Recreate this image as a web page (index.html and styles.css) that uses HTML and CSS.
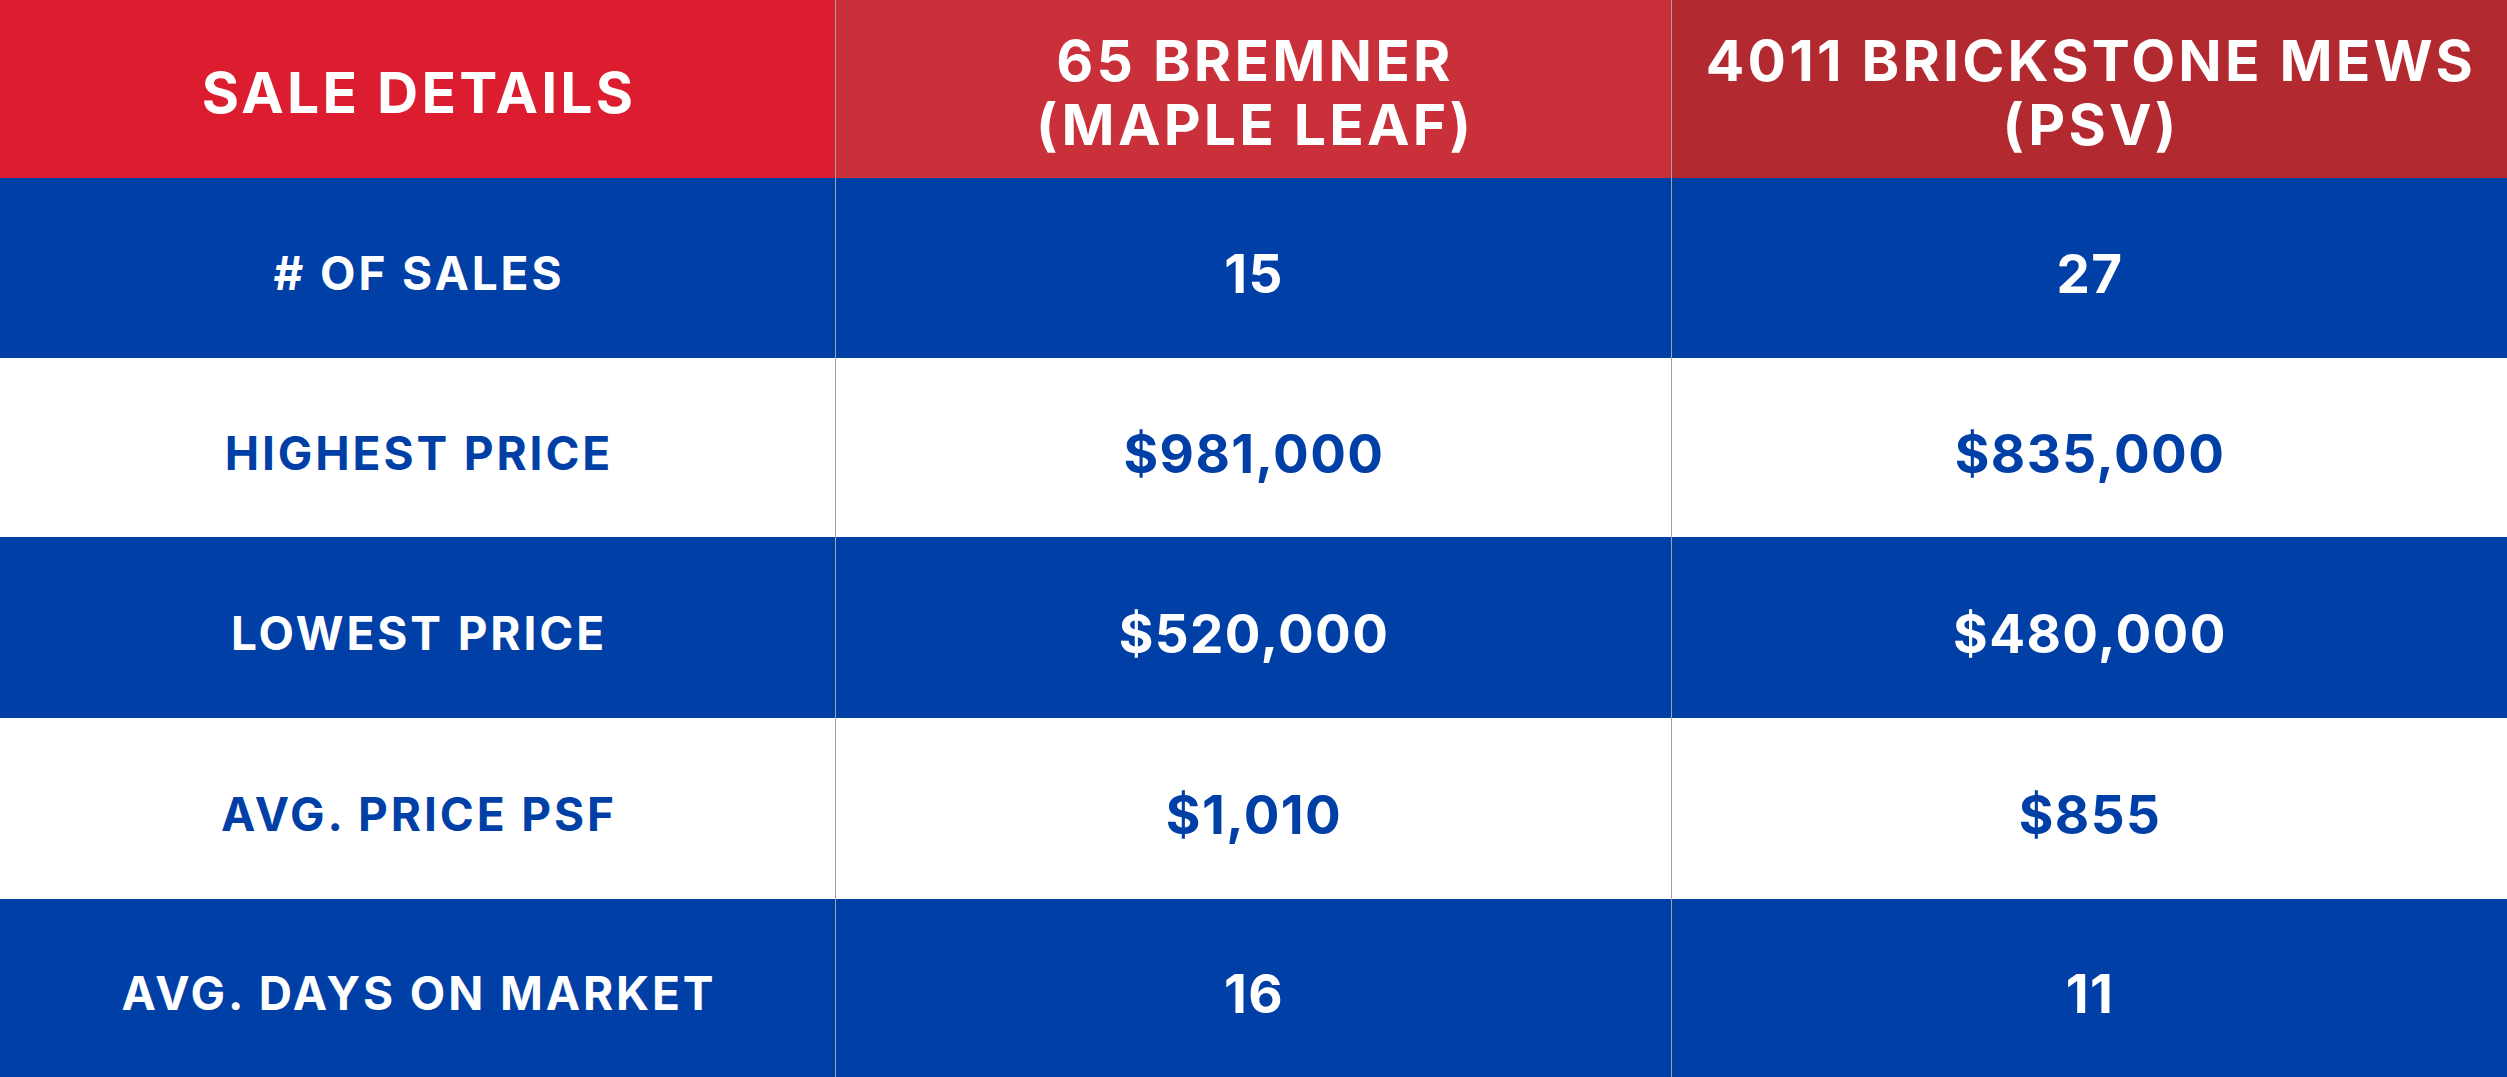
FILE: index.html
```html
<!DOCTYPE html>
<html>
<head>
<meta charset="utf-8">
<link rel="stylesheet" href="styles.css">
</head>
<body>
<div class="table">
  <div class="cell head h1">SALE DETAILS</div>
  <div class="cell head h2 div">65 BREMNER<br>(MAPLE LEAF)</div>
  <div class="cell head h3 div">4011 BRICKSTONE MEWS<br>(PSV)</div>

  <div class="cell blue label"># OF SALES</div>
  <div class="cell blue val div">15</div>
  <div class="cell blue val div">27</div>

  <div class="cell white label">HIGHEST PRICE</div>
  <div class="cell white val div">$981,000</div>
  <div class="cell white val div">$835,000</div>

  <div class="cell blue label">LOWEST PRICE</div>
  <div class="cell blue val div">$520,000</div>
  <div class="cell blue val div">$480,000</div>

  <div class="cell white label">AVG. PRICE PSF</div>
  <div class="cell white val div">$1,010</div>
  <div class="cell white val div">$855</div>

  <div class="cell blue label">AVG. DAYS ON MARKET</div>
  <div class="cell blue val div">16</div>
  <div class="cell blue val div">11</div>
</div>
</body>
</html>
```
FILE: styles.css
```css
html, body {
  margin: 0;
  padding: 0;
  background: #ffffff;
}
.table {
  display: grid;
  grid-template-columns: 835px 836px 1fr;
  grid-template-rows: 178px 180px 179px 181px 181px 178px;
  width: 2507px;
  height: 1077px;
  overflow: hidden;
  font-family: "Inter", "Liberation Sans", sans-serif;
  font-weight: 700;
}
.cell {
  display: flex;
  align-items: center;
  justify-content: center;
  text-align: center;
  box-sizing: border-box;
}
.div {
  border-left: 1px solid #a3a3a3;
}
.head {
  color: #ffffff;
  font-size: 57px;
  line-height: 64px;
  letter-spacing: 3.2px;
  padding-left: 3px;
  padding-top: 8px;
}
.h1 { background: #dc1c2f; }
.h2 { background: #c9303a; }
.h3 { background: #b22a30; }
.blue {
  background: #003fa6;
  color: #ffffff;
}
.white {
  background: #ffffff;
  color: #003fa6;
}
.label {
  font-size: 46px;
  letter-spacing: 2.9px;
  padding-left: 3px;
  padding-top: 10px;
}
.val {
  font-size: 53px;
  letter-spacing: 1.4px;
  padding-left: 1px;
  padding-top: 12px;
}
```
